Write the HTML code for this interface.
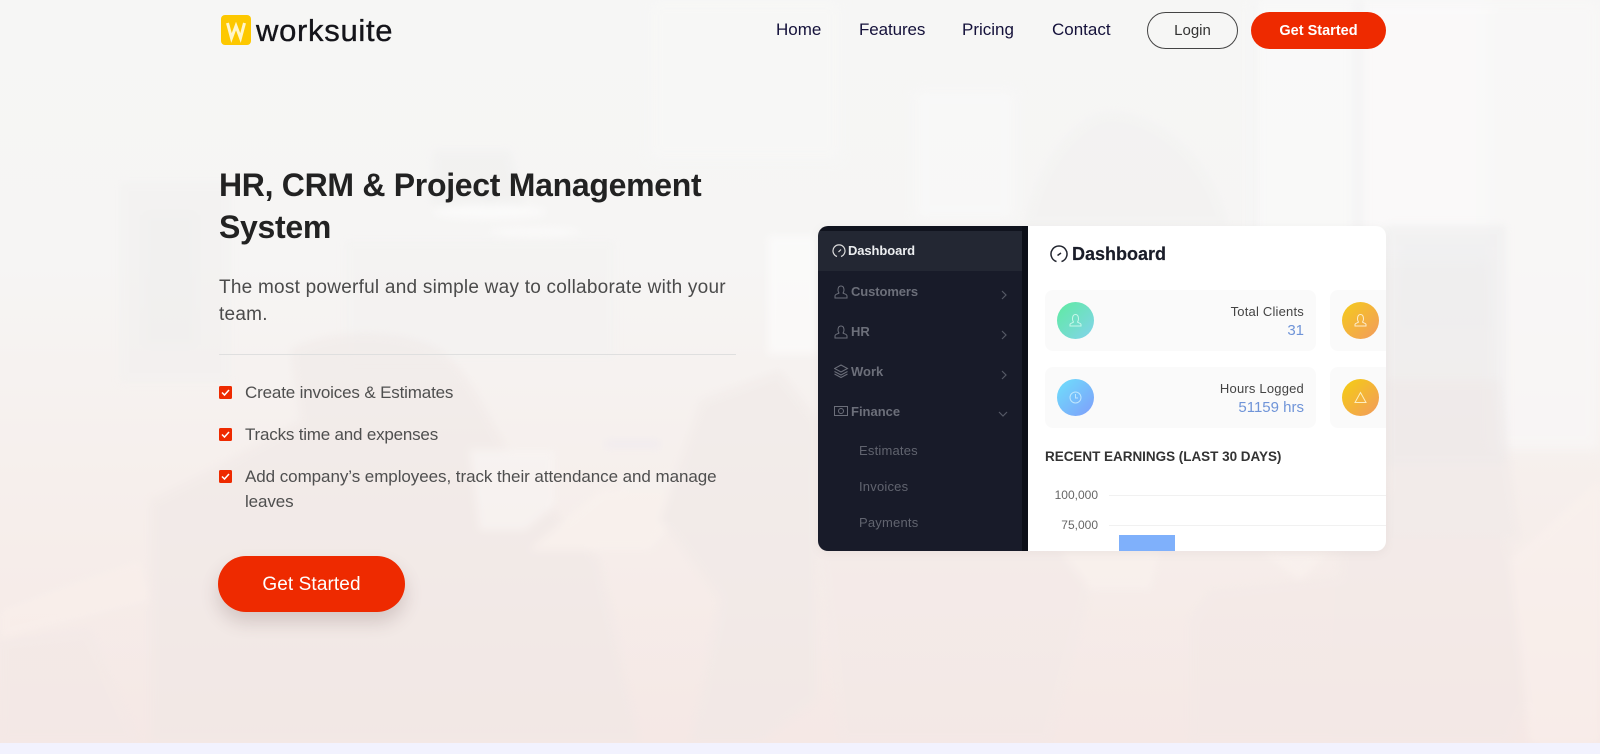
<!DOCTYPE html>
<html lang="en"><head><meta charset="utf-8"><title>Worksuite</title>
<style>
*{box-sizing:border-box;margin:0;padding:0}
html,body{width:1600px;height:754px;overflow:hidden;background:#f2f2fe;font-family:"Liberation Sans",sans-serif}
.hero{position:absolute;left:0;top:0;width:1600px;height:743px;overflow:hidden;background:linear-gradient(180deg,#f6f6f5 0%,#f6f5f4 35%,#f6efec 65%,#f5e8e5 100%)}
.hero svg{position:absolute;left:0;top:0}
.t{position:absolute;white-space:nowrap;line-height:1}
.nav{font-size:17px;color:#14113a;top:21px}
.btn{position:absolute;border-radius:40px;text-align:center}
.h{font-size:32px;font-weight:bold;color:#222;left:219px;letter-spacing:-.3px}
.s{font-size:19px;color:#4b4b4b;left:219px;letter-spacing:.24px}
.l{font-size:17px;color:#4f4f4f;left:245px}
.c{position:absolute;left:219px;width:13px;height:13px;background:#ee2a00;border-radius:1.5px}
.c svg{position:absolute;left:0;top:0}
.panel{position:absolute;left:818px;top:226px;width:568px;height:325px;border-radius:10px;overflow:hidden;background:#fff;box-shadow:0 2px 10px rgba(120,100,100,.08)}
.panel .in{position:absolute;left:0;top:0;width:568px;height:325px;filter:blur(.35px)}
.side{position:absolute;left:0;top:0;width:210px;height:325px;background:#181b29}
.strip{position:absolute;left:204px;top:0;width:6px;height:325px;background:#0c0f18}
.top{position:absolute;left:0;top:0;width:210px;height:5px;background:#10131e}
.act{position:absolute;left:0;top:5px;width:204px;height:40px;background:#232733}
.i{position:absolute;font-size:13px;font-weight:bold;color:#6c6f7a;white-space:nowrap;line-height:1}
.sub{position:absolute;font-size:13px;color:#61646f;white-space:nowrap;line-height:1;left:41px;letter-spacing:.2px}
.card{position:absolute;background:#fafafa;border-radius:8px;height:61px}
.circ{position:absolute;width:37px;height:37px;border-radius:50%}
.r{position:absolute;white-space:nowrap;line-height:1;text-align:right}
.panel svg{position:absolute}
</style></head><body>
<div class="hero">
<svg width="1600" height="743" viewBox="0 0 1600 743">
<defs>
<filter id="b1" x="-20%" y="-20%" width="140%" height="140%"><feGaussianBlur stdDeviation="6"/></filter>
<filter id="b2" x="-20%" y="-20%" width="140%" height="140%"><feGaussianBlur stdDeviation="4"/></filter>
</defs>
<g filter="url(#b1)" opacity=".7">
<rect x="1250" y="0" width="250" height="260" fill="#fbfbfb"/>
<rect x="1350" y="0" width="130" height="230" fill="#fcfbfc"/>
<rect x="650" y="0" width="190" height="160" fill="#f8f8f7"/>
<rect x="915" y="90" width="100" height="130" fill="#f9f9f9"/>
<rect x="1490" y="0" width="110" height="450" fill="#f9f8f8"/>
</g>
<g filter="url(#b2)" opacity=".5">
<rect x="1250" y="0" width="8" height="300" fill="#f1f1f1"/>
<rect x="1352" y="0" width="12" height="260" fill="#f0f0f1"/>
<path d="M1025 226C1035 160 1080 112 1110 112C1160 112 1215 160 1228 226Z" fill="#f1f1f0"/>
<path d="M433 150H510L525 205H430Z" fill="#efefee"/>
<ellipse cx="490" cy="212" rx="56" ry="7" fill="#ffffff"/>
<ellipse cx="535" cy="232" rx="45" ry="4" fill="#ffffff"/>
<rect x="120" y="182" width="110" height="200" fill="#f1f0ef"/>
<rect x="145" y="215" width="50" height="130" fill="#eeedec"/>
<rect x="345" y="240" width="270" height="120" fill="#f3f2f1"/>
<rect x="768" y="236" width="50" height="118" fill="#ffffff"/>
<rect x="1386" y="225" width="120" height="240" fill="#ecebec"/>
<rect x="1400" y="240" width="90" height="90" fill="#e9e9eb"/>
</g>
<g filter="url(#b2)" opacity=".45">
<path d="M150 743V500L210 470L300 420L290 350C320 330 400 325 440 350C470 370 490 420 520 470L600 560L640 743Z" fill="#efe7e5"/>
<path d="M0 610L140 560L150 600L0 640Z" fill="#fbf1ec"/>
<path d="M0 640L90 630L140 743H0Z" fill="#f2e8e6"/>
<path d="M620 480L700 470 705 530H620Z" fill="#f7f4f2"/>
<path d="M470 450H555V505L525 530H480Z" fill="#f9f7f6"/>
<rect x="605" y="440" width="55" height="8" fill="#ebe6f2"/>
<path d="M600 490H700L650 550H530Z" fill="#fbf4ef"/>
<path d="M700 400L780 370 818 420V700L760 743H690L720 600L660 520Z" fill="#efe8e6"/>
<path d="M820 551H1100L1050 743H840Z" fill="#f2e9e7"/>
<path d="M1060 551H1160L1150 590H1090Z" fill="#fbf4f0"/>
<path d="M1260 551H1330L1300 580Z" fill="#fcf5f1"/>
<path d="M1190 620L1210 590 1500 560 1540 680 1510 743H1190Z" fill="#f2e8e6"/>
<path d="M1340 551L1400 470 1500 510 1530 620 1500 743H1330Z" fill="#f1e8e6"/>
<path d="M1510 560L1600 480V743H1530Z" fill="#fcf2ee"/>
<path d="M1386 380L1500 380 1520 540H1386Z" fill="#efe8e7"/>
</g>
</svg>
</div>

<div style="position:absolute;left:221px;top:15px;width:30px;height:30px;background:#fdc800;border-radius:4px"></div>
<svg style="position:absolute;left:221px;top:15px" width="30" height="30" viewBox="0 0 30 30"><path d="M6.500 8L10.500 23L15 11L19.500 23L23.500 8" fill="none" stroke="#fff6cc" stroke-width="3"/></svg>
<div class="t" style="left:256px;top:15px;font-size:31px;color:#14141a;letter-spacing:.7px;-webkit-text-stroke:.35px #14141a">worksuite</div>

<div class="t nav" style="left:776px">Home</div>
<div class="t nav" style="left:859px;letter-spacing:-.1px">Features</div>
<div class="t nav" style="left:962px">Pricing</div>
<div class="t nav" style="left:1052px">Contact</div>
<div class="btn" style="left:1147px;top:12px;width:91px;height:37px;border:1px solid #444;font-size:15px;line-height:35px;color:#333">Login</div>
<div class="btn" style="left:1251px;top:12px;width:135px;height:37px;background:#ee2a00;color:#fff;font-size:14.500px;font-weight:bold;line-height:38px">Get Started</div>

<div class="t h" style="top:169px">HR, CRM &amp; Project Management</div>
<div class="t h" style="top:211px">System</div>
<div class="t s" style="top:278px">The most powerful and simple way to collaborate with your</div>
<div class="t s" style="top:305px">team.</div>
<div style="position:absolute;left:219px;top:354px;width:517px;height:1px;background:#dfdfdf"></div>

<div class="c" style="top:386px"><svg width="13" height="13"><path d="M3 6.500L5.500 9L10 4" fill="none" stroke="#fff" stroke-width="1.500"/></svg></div>
<div class="c" style="top:428px"><svg width="13" height="13"><path d="M3 6.500L5.500 9L10 4" fill="none" stroke="#fff" stroke-width="1.500"/></svg></div>
<div class="c" style="top:470px"><svg width="13" height="13"><path d="M3 6.500L5.500 9L10 4" fill="none" stroke="#fff" stroke-width="1.500"/></svg></div>
<div class="t l" style="top:384px;letter-spacing:-.16px">Create invoices &amp; Estimates</div>
<div class="t l" style="top:426px;letter-spacing:-.2px">Tracks time and expenses</div>
<div class="t l" style="top:468px;letter-spacing:-.06px">Add company’s employees, track their attendance and manage</div>
<div class="t l" style="top:493px;letter-spacing:-.1px">leaves</div>

<div class="btn" style="left:218px;top:556px;width:187px;height:56px;background:#ee2a00;color:#fff;font-size:19px;line-height:58px;letter-spacing:.1px;box-shadow:0 10px 18px rgba(90,60,60,.2)">Get Started</div>

<div class="panel"><div class="in">
<div class="side"></div><div class="top"></div><div class="act"></div><div class="strip"></div>
<svg style="left:14px;top:18px" width="14" height="14" viewBox="0 0 14 14"><path d="M5 12.500A6 6 0 1 1 9 12.500" fill="none" stroke="#ddd" stroke-width="1.200"/><path d="M6.500 8L9 5.500" stroke="#ddd" stroke-width="1.200"/></svg>
<div class="i" style="left:30px;top:18px;color:#eceef0;letter-spacing:-.1px">Dashboard</div>
<svg style="left:16px;top:58px" width="15" height="15" viewBox="0 0 15 15"><path d="M1 14V12C1 10 4 10 5 9C3.500 7 3.500 2 7 2C10.500 2 10.500 7 9 9C10 10 13 10 13 12V14Z" fill="none" stroke="#6c6f7a"/></svg>
<div class="i" style="left:33px;top:59px;letter-spacing:-.1px">Customers</div>
<svg style="left:16px;top:98px" width="15" height="15" viewBox="0 0 15 15"><path d="M1 14V12C1 10 4 10 5 9C3.500 7 3.500 2 7 2C10.500 2 10.500 7 9 9C10 10 13 10 13 12V14Z" fill="none" stroke="#6c6f7a"/></svg>
<div class="i" style="left:33px;top:99px">HR</div>
<svg style="left:16px;top:138px" width="15" height="15" viewBox="0 0 15 15"><path d="M7 1L13.500 4.500L7 8L.500 4.500ZM.500 7.500L7 11L13.500 7.500M.500 10L7 13.500L13.500 10" fill="none" stroke="#6c6f7a"/></svg>
<div class="i" style="left:33px;top:139px">Work</div>
<svg style="left:16px;top:179px" width="14" height="12" viewBox="0 0 14 12"><rect x=".5" y="1.500" width="13" height="9" fill="none" stroke="#6c6f7a"/><circle cx="7" cy="6" r="2.500" fill="none" stroke="#6c6f7a"/></svg>
<div class="i" style="left:33px;top:179px">Finance</div>
<svg style="left:182px;top:64px" width="8" height="10" viewBox="0 0 8 10"><path d="M2 1L6 5L2 9" fill="none" stroke="#555965" stroke-width="1.200"/></svg>
<svg style="left:182px;top:104px" width="8" height="10" viewBox="0 0 8 10"><path d="M2 1L6 5L2 9" fill="none" stroke="#555965" stroke-width="1.200"/></svg>
<svg style="left:182px;top:144px" width="8" height="10" viewBox="0 0 8 10"><path d="M2 1L6 5L2 9" fill="none" stroke="#555965" stroke-width="1.200"/></svg>
<svg style="left:180px;top:184px" width="10" height="8" viewBox="0 0 10 8"><path d="M1 2L5 6L9 2" fill="none" stroke="#555965" stroke-width="1.200"/></svg>
<div class="sub" style="top:218px">Estimates</div>
<div class="sub" style="top:254px">Invoices</div>
<div class="sub" style="top:290px">Payments</div>

<svg style="left:232px;top:19px" width="18" height="18" viewBox="0 0 18 18"><path d="M6.500 16.600A8 8 0 1 1 11.500 16.600" fill="none" stroke="#22252f" stroke-width="1.500"/><path d="M7.500 10.500L11 8" stroke="#22252f" stroke-width="1.500"/></svg>
<div class="r" style="left:254px;top:19px;font-size:18px;font-weight:bold;color:#1a1d29;letter-spacing:0;-webkit-text-stroke:.2px #1a1d29">Dashboard</div>

<div class="card" style="left:227px;top:64px;width:271px"></div>
<div class="card" style="left:512px;top:64px;width:80px"></div>
<div class="card" style="left:227px;top:141px;width:271px"></div>
<div class="card" style="left:512px;top:141px;width:80px"></div>
<div class="circ" style="left:239px;top:76px;background:linear-gradient(135deg,#5eeba0,#83d3ec)"></div>
<div class="circ" style="left:524px;top:76px;background:linear-gradient(135deg,#f5cc1a,#f29a5e)"></div>
<div class="circ" style="left:239px;top:153px;background:linear-gradient(135deg,#6ee0fb,#7f9dfb)"></div>
<div class="circ" style="left:524px;top:153px;background:linear-gradient(135deg,#f5cf10,#f29a5e)"></div>
<svg style="left:251px;top:87px" width="13" height="14" viewBox="0 0 13 14"><path d="M1 13V11.500C1 10 4 10 4.500 9C3 7 3 1.500 6.500 1.500C10 1.500 10 7 8.500 9C9 10 12 10 12 11.500V13Z" fill="none" stroke="#c8f7ea"/></svg>
<svg style="left:536px;top:87px" width="13" height="14" viewBox="0 0 13 14"><path d="M1 13V11.500C1 10 4 10 4.500 9C3 7 3 1.500 6.500 1.500C10 1.500 10 7 8.500 9C9 10 12 10 12 11.500V13Z" fill="none" stroke="#fdeccc"/></svg>
<svg style="left:251px;top:165px" width="13" height="13" viewBox="0 0 13 13"><circle cx="6.500" cy="6.500" r="5.500" fill="none" stroke="#bfe6fd"/><path d="M6.500 3V7H9" fill="none" stroke="#bfe6fd"/></svg>
<svg style="left:536px;top:165px" width="13" height="13" viewBox="0 0 13 13"><path d="M6.500 1.500L12 11.500H1Z" fill="none" stroke="#fdeec0"/></svg>

<div class="r" style="right:82px;top:79px;font-size:13px;color:#444;letter-spacing:.2px">Total Clients</div>
<div class="r" style="right:82px;top:97px;font-size:15px;color:#6f94d8">31</div>
<div class="r" style="right:82px;top:156px;font-size:13px;color:#444;letter-spacing:.2px">Hours Logged</div>
<div class="r" style="right:82px;top:174px;font-size:15px;color:#6f94d8">51159 hrs</div>
<div class="r" style="left:227px;top:224px;font-size:13.500px;font-weight:bold;color:#333;letter-spacing:-.03px">RECENT EARNINGS (LAST 30 DAYS)</div>
<div class="r" style="right:288px;top:263px;font-size:12px;color:#666">100,000</div>
<div class="r" style="right:288px;top:293px;font-size:12px;color:#666">75,000</div>
<div style="position:absolute;left:291px;top:269px;width:277px;height:1px;background:#f1f1f1"></div>
<div style="position:absolute;left:291px;top:299px;width:277px;height:1px;background:#f1f1f1"></div>
<div style="position:absolute;left:301px;top:309px;width:56px;height:16px;background:#7fb0fb"></div>
</div></div>
<div style="position:absolute;left:0;top:743px;width:1600px;height:11px;background:#f2f2fe"></div>
</body></html>
